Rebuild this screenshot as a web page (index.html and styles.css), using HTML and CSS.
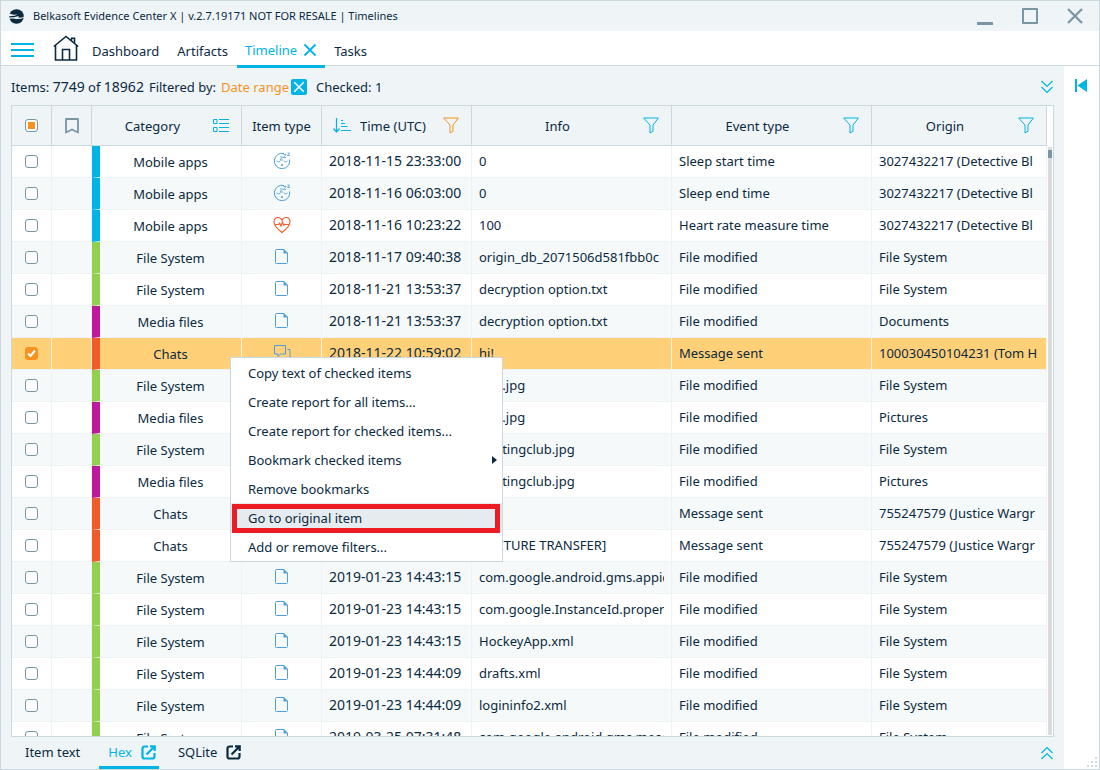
FILE: index.html
```html
<!DOCTYPE html>
<html lang="en">
<head>
    <meta charset="UTF-8">
    <meta name="viewport" content="width=device-width, initial-scale=1.0">
    <title>Belkasoft Evidence Center X</title>
    <link rel="stylesheet" href="styles.css">
</head>
<body>
    <!-- Shared icons -->
    <svg class="sprite" aria-hidden="true">
        <symbol id="icon-filter" viewBox="0 0 16 17">
            <path d="M.6 1h14.8L10 8v6.2L7 16V8z" fill="none" stroke="currentColor"/>
        </symbol>
        <symbol id="icon-close" viewBox="0 0 14 14">
            <path d="M1.5 1.5l11 11M12.5 1.5l-11 11" fill="none" stroke="currentColor" stroke-width="1.8"/>
        </symbol>
        <symbol id="icon-open" viewBox="0 0 15 15">
            <path d="M7 1.5H3.500a2 2 0 0 0-2 2v8a2 2 0 0 0 2 2h8a2 2 0 0 0 2-2V8M9 1.300h4.700V6M13.500 1.500L5.500 9.500" fill="none" stroke="currentColor" stroke-width="2.200"/>
        </symbol>
        <symbol id="icon-sleep" viewBox="0 0 18 18">
            <g fill="none" stroke="currentColor">
                <path d="M11 1.500A7.700 7.700 0 1 0 16.600 7.500"/>
                <path d="M3.500 9q2 1.800 4 0M10.500 9q2 1.800 4 0M7 5h2.500L7 8h3M10.500 2.500H13l-2.500 3H13M14.500 1h2l-2 2.500h2.500" stroke-width=".8"/>
                <circle cx="9" cy="13" r=".7"/>
            </g>
        </symbol>
        <symbol id="icon-heart" viewBox="0 0 18 18">
            <path d="M9 16.500C5 13.500 1 9.800 1 5.800 1 3 2.800 1.500 5 1.500c1.800 0 3.200 1 4 2.700.8-1.700 2.200-2.700 4-2.700 2.200 0 4 1.500 4 4.300 0 4-4 7.700-8 10.700zM1.500 8.500h4l1.200-1.500 1.300 3 1.500-4 1.300 3.500.8-1H16.500" fill="none" stroke="currentColor" stroke-width="1.100"/>
        </symbol>
        <symbol id="icon-file" viewBox="0 0 18 18">
            <path d="M3.500 1.500h7.500l3.500 3.500v9.500a1 1 0 0 1-1 1h-10a1 1 0 0 1-1-1v-12a1 1 0 0 1 1-1z" fill="none" stroke="currentColor"/>
            <path d="M10.500 1v4.500h4z" fill="currentColor"/>
        </symbol>
        <symbol id="icon-chat" viewBox="0 0 18 18">
            <path d="M1.500 1.500h11v8.500H7.500L5 12.500V10H1.500zM14.500 5.500h2.500v8h-2v2L12.500 13.500H8" fill="none" stroke="currentColor"/>
        </symbol>
    </svg>

    <div class="window">
        <header class="titlebar">
            <svg class="logo" viewBox="0 0 16 16">
                <circle cx="8" cy="8" r="7.8" fill="#0b2a3f"/>
                <path d="M0 4.800l5 1.400 4-.4-3 1.500-6 .4zM0 9l5.500-.3 4-.9 1.500.7-1.800 1.700L13 10.500l3-1.500v-1l-2 1-3.500.3L8 11l-3-.8-5 .2z" fill="#eff4f7"/>
            </svg>
            <span class="title">Belkasoft Evidence Center X | v.2.7.19171 NOT FOR RESALE | Timelines</span>
            <div class="window-buttons">
                <button aria-label="Minimize"><svg width="16" height="18" viewBox="0 0 16 18"><path d="M1 16.500h14" stroke-width="3" stroke-linecap="round"/></svg></button>
                <button aria-label="Maximize"><svg width="16" height="18" viewBox="0 0 16 18"><path d="M1 2h14v14H1z" stroke-width="2" stroke-linejoin="round"/></svg></button>
                <button aria-label="Close"><svg width="16" height="18" viewBox="0 0 16 18"><path d="M1 2l14 14M15 2L1 16" stroke-width="2.200"/></svg></button>
            </div>
        </header>

        <nav class="main-nav">
            <button class="menu-button" aria-label="Menu"><svg width="23" height="16" viewBox="0 0 23 16"><path d="M0 2h23M0 8h23M0 14h23" stroke="#00b4e5" stroke-width="2"/></svg></button>
            <a href="#" class="home" aria-label="Home"><svg width="26" height="26" viewBox="0 0 26 26"><path d="M.8 11.500L13 1.500l12.200 10M2.500 10v15h21V10M18.500 5.500V3.200h3v5M9.500 25V14.500h7V25" fill="none" stroke="#0b2a3f" stroke-width="1.600"/></svg></a>
            <a href="#" class="nav-tab">Dashboard</a>
            <a href="#" class="nav-tab">Artifacts</a>
            <div class="nav-tab active">
                <a href="#">Timeline</a>
                <button aria-label="Close Timeline"><svg width="14" height="14"><use href="#icon-close"/></svg></button>
            </div>
            <a href="#" class="nav-tab">Tasks</a>
        </nav>

        <div class="workspace">
            <main class="content">
                <div class="filter-bar">
                    <span>Items: <span class="count">7749</span> of <span class="count">18962</span></span>
                    <span class="filtered">Filtered by:</span>
                    <a href="#" class="filter-link">Date range</a>
                    <button class="clear-filter" aria-label="Clear filter"><svg width="12" height="12"><use href="#icon-close"/></svg></button>
                    <span>Checked: 1</span>
                    <button class="collapse" aria-label="Expand all"><svg width="12" height="14" viewBox="0 0 12 14"><path d="M.5 1L6 6.500 11.500 1M.5 7L6 12.500 11.500 7" fill="none" stroke="#00b4e5" stroke-width="1.200"/></svg></button>
                </div>

                <div class="grid">
                    <div class="table-area">
                        <table>
                            <colgroup>
                                <col class="col-small"><col class="col-small"><col class="col-medium"><col class="col-type">
                                <col class="col-medium"><col class="col-large"><col class="col-large"><col>
                            </colgroup>
                            <thead>
                                <tr>
                                    <th><input type="checkbox" class="partial" aria-label="Select all"></th>
                                    <th><svg class="bookmark" width="14" height="16" viewBox="0 0 14 16"><path d="M1 1h12v13.500L7 11.500l-6 3z" fill="none" stroke="#7896a4" stroke-width="1.800" stroke-linejoin="round"/></svg></th>
                                    <th><div class="head"><span>Category</span><svg class="head-icon" width="16" height="13" viewBox="0 0 16 13"><path d="M.5.5h3.500v4H.5zM.5 8.500h3.500v4H.5zM6 .5h10M6 4.500h10M6 8.500h10M6 12.500h10" fill="none" stroke="currentColor"/></svg></div></th>
                                    <th>Item type</th>
                                    <th><div class="head sorted"><svg class="sort-icon" width="18" height="16" viewBox="0 0 18 16"><path d="M3.500 0v14M.5 10.500l3 3.500 3-3.500M8 2.500h2M8 5.500h4M8 8.500h6.500M8 12.500h10" fill="none" stroke="currentColor" stroke-width="1.200"/></svg><span>Time (UTC)</span><svg class="head-icon orange" width="16" height="17"><use href="#icon-filter"/></svg></div></th>
                                    <th><div class="head"><span>Info</span><svg class="head-icon" width="16" height="17"><use href="#icon-filter"/></svg></div></th>
                                    <th><div class="head"><span>Event type</span><svg class="head-icon" width="16" height="17"><use href="#icon-filter"/></svg></div></th>
                                    <th><div class="head"><span>Origin</span><svg class="head-icon" width="16" height="17"><use href="#icon-filter"/></svg></div></th>
                                </tr>
                            </thead>
                            <tbody id="rows"></tbody>
                        </table>
                    </div>
                    <div class="scrollbar"><div class="thumb"></div></div>

                    <div class="context-menu" role="menu">
                        <button role="menuitem">Copy text of checked items</button>
                        <button role="menuitem">Create report for all items...</button>
                        <button role="menuitem">Create report for checked items...</button>
                        <button role="menuitem" class="submenu">Bookmark checked items</button>
                        <button role="menuitem">Remove bookmarks</button>
                        <button role="menuitem" class="highlighted">Go to original item</button>
                        <button role="menuitem">Add or remove filters...</button>
                    </div>
                </div>

                <div class="bottom-tabs">
                    <a href="#" class="bottom-tab">Item text</a>
                    <a href="#" class="bottom-tab active">Hex <svg width="15" height="15"><use href="#icon-open"/></svg></a>
                    <a href="#" class="bottom-tab">SQLite <svg width="15" height="15"><use href="#icon-open"/></svg></a>
                    <button class="collapse" aria-label="Show panel"><svg width="12" height="14" viewBox="0 0 12 14"><path d="M.5 7L6 1.500 11.500 7M.5 13L6 7.500 11.500 13" fill="none" stroke="#00b4e5" stroke-width="1.200"/></svg></button>
                </div>
            </main>

            <aside class="side-rail">
                <button aria-label="Open side panel"><svg width="12" height="13" viewBox="0 0 12 13"><path d="M0 0h2v13H0zM12 0v13L2.500 6.500z" fill="#00b4e5"/></svg></button>
                <svg class="grip" width="11" height="11" viewBox="0 0 11 11"><path d="M8 0h2v2H8zM4 4h2v2H4zM8 4h2v2H8zM0 8h2v2H0zM4 8h2v2H4zM8 8h2v2H8z" fill="#cfdae0"/></svg>
            </aside>
        </div>
    </div>
    <script src="script.js"></script>
</body>
</html>
```
FILE: styles.css
```css
* {
    box-sizing: border-box;
}

body {
    margin: 0;
    height: 100vh;
    overflow: hidden;
    font-family: "Noto Sans", "Open Sans", sans-serif;
    font-size: 13px;
    line-height: 20px;
    color: #0b2a3f;
}

button {
    display: flex;
    padding: 0;
    border: 0;
    background: none;
    font: inherit;
    color: inherit;
    cursor: pointer;
}

a {
    color: inherit;
    text-decoration: none;
}

svg {
    display: block;
    flex: none;
}

.sprite {
    position: absolute;
    width: 0;
    height: 0;
}

.window {
    display: flex;
    flex-direction: column;
    height: 100vh;
    border: 1px solid #cbd8de;
    background-color: #eff4f7;
}

/* Title bar */
.titlebar {
    display: flex;
    align-items: center;
    height: 30px;
    padding: 0 16px 0 8px;
}

.logo {
    width: 15px;
    height: 15px;
}

.title {
    margin-left: 9px;
    font-size: 11px;
}

.window-buttons {
    display: flex;
    gap: 29px;
    margin-left: auto;
}

.window-buttons path {
    fill: none;
    stroke: #7896a4;
}

/* Navigation */
.main-nav {
    display: flex;
    align-items: center;
    height: 35px;
    padding-left: 10px;
    background-color: #fff;
    border-bottom: 1px solid #cbd8de;
}

.menu-button {
    margin-top: 4px;
}

.home {
    margin: 0 4px 0 19px;
}

.nav-tab {
    display: flex;
    align-items: center;
    gap: 6px;
    height: 35px;
    margin-top: 1px;
    padding: 4px 9px 0;
}

.nav-tab.active {
    height: 36px;
    margin-top: 3px;
    padding: 4px 8px 0;
    color: #00b4e5;
    border-bottom: 3px solid #00b4e5;
}

/* Main area */
.workspace {
    display: flex;
    flex: 1;
    min-height: 0;
}

.content {
    display: flex;
    flex-direction: column;
    flex: 1;
    min-width: 0;
    padding: 0 10px;
}

.filter-bar {
    display: flex;
    align-items: center;
    height: 39px;
    padding-top: 2px;
}

.filtered {
    margin: 0 5px;
}

.count {
    font-size: 14px;
}

.filter-link {
    color: #f7921e;
}

.clear-filter {
    align-items: center;
    justify-content: center;
    width: 16px;
    height: 16px;
    margin: 0 9px 0 2px;
    color: #fff;
    background-color: #00b4e5;
    border-radius: 2px;
}

.collapse {
    margin: 0 1px 0 auto;
}

.grid {
    position: relative;
    display: flex;
    flex: 1;
    min-height: 0;
    border: 1px solid #cbd8de;
    background-color: #fff;
}

.table-area {
    flex: 1;
    min-width: 0;
    overflow: hidden;
}

table {
    width: 100%;
    table-layout: fixed;
    border-collapse: separate;
    border-spacing: 0;
}

.col-small {
    width: 40px;
}

.col-medium {
    width: 150px;
}

.col-type {
    width: 80px;
}

.col-large {
    width: 200px;
}

th {
    height: 40px;
    padding: 0;
    font-weight: normal;
    background-color: #eff4f7;
    border-right: 1px solid #cbd8de;
    border-bottom: 1px solid #cbd8de;
}

.head {
    display: flex;
    align-items: center;
}

.head span {
    flex: 1;
    text-align: center;
}

.head.sorted span {
    padding-right: 8px;
}

.head-icon {
    margin-right: 12px;
    color: #00b4e5;
}

.head-icon.orange {
    color: #f7921e;
}

.sort-icon {
    margin-left: 11px;
    color: #00b4e5;
}

.bookmark {
    margin: 0 auto;
}

td {
    height: 32px;
    padding: 0 7px 2px;
    border-right: 1px solid #eff3f5;
    border-bottom: 1px solid #eff3f5;
}

tbody tr:nth-child(even) {
    background-color: #f5f9fa;
}

tbody tr.checked {
    background-color: #ffd078;
}

tr.checked td {
    border-right-color: #fff5e0;
}

td div {
    overflow: hidden;
    white-space: nowrap;
}

.check-cell {
    padding: 0;
}

.category {
    padding: 1px 0 0;
    text-align: center;
    border-left: 8px solid;
}

.category.mobile {
    border-left-color: #00b4e5;
}

.category.file {
    border-left-color: #92d050;
}

.category.media {
    border-left-color: #c0179f;
}

.category.chat {
    border-left-color: #f15a29;
}

.time {
    font-size: 14px;
}

.type-icon {
    width: 18px;
    height: 18px;
    margin: 0 auto;
    color: #4a9fdc;
}

.type-icon.heart {
    color: #f15a29;
}

input[type="checkbox"] {
    display: block;
    appearance: none;
    width: 13px;
    height: 13px;
    margin: 0 auto;
    border: 1px solid #7896a4;
    border-radius: 3px;
    background-color: #fff;
}

input[type="checkbox"].partial {
    background-image: linear-gradient(#f7921e, #f7921e);
    background-size: 7px 7px;
    background-position: center;
    background-repeat: no-repeat;
}

input[type="checkbox"]:checked {
    border-color: #f7921e;
    background: #f7921e url("data:image/svg+xml,%3Csvg xmlns='http://www.w3.org/2000/svg' viewBox='0 0 11 11'%3E%3Cpath d='M2 5.500l2.500 2.500L9 2.500' fill='none' stroke='%23fff' stroke-width='2'/%3E%3C/svg%3E");
}

.scrollbar {
    width: 6px;
    margin: 41px 0 1px;
    padding-top: 3px;
    border: solid #fff;
    border-width: 0 1px;
    background-color: #dcdcdc;
}

.thumb {
    height: 8px;
    background-color: #7896a4;
}

/* Context menu */
.context-menu {
    position: absolute;
    top: 251px;
    left: 218px;
    width: 273px;
    border: 1px solid #cbd8de;
    background-color: #fff;
}

.context-menu button {
    position: relative;
    align-items: center;
    width: 100%;
    height: 29px;
    padding-left: 17px;
}

.context-menu .highlighted {
    background-color: #e6ebef;
}

.highlighted::after {
    content: "";
    position: absolute;
    inset: 1px 2px -1px 1px;
    border: 5px solid #ed1c24;
}

.submenu::after {
    content: "";
    margin-left: auto;
    margin-right: 5px;
    border: 4px solid transparent;
    border-left: 5px solid #0b2a3f;
    border-right: 0;
}

/* Bottom tabs */
.bottom-tabs {
    display: flex;
    align-items: center;
    height: 32px;
    padding-left: 4px;
}

.bottom-tab {
    display: flex;
    align-items: center;
    gap: 9px;
    height: 32px;
    padding: 0 10px 2px;
}

.bottom-tab.active {
    margin: 0 9px;
    padding: 1px 3px 0 9px;
    color: #00b4e5;
    border-bottom: 3px solid #00b4e5;
}

/* Side rail */
.side-rail {
    display: flex;
    flex-direction: column;
    justify-content: space-between;
    align-items: center;
    width: 35px;
    padding-top: 13px;
    background-color: #fff;
}

.side-rail button {
    margin-right: 2px;
}

.grip {
    align-self: flex-end;
    margin: 0 1px 1px 0;
}
```
FILE: script.js
```javascript
const rows = [
    ['mobile', 'sleep', '2018-11-15 23:33:00', '0', 'Sleep start time', '3027432217 (Detective Bl'],
    ['mobile', 'sleep', '2018-11-16 06:03:00', '0', 'Sleep end time', '3027432217 (Detective Bl'],
    ['mobile', 'heart', '2018-11-16 10:23:22', '100', 'Heart rate measure time', '3027432217 (Detective Bl'],
    ['file', 'file', '2018-11-17 09:40:38', 'origin_db_2071506d581fbb0c', 'File modified', 'File System'],
    ['file', 'file', '2018-11-21 13:53:37', 'decryption option.txt', 'File modified', 'File System'],
    ['media', 'file', '2018-11-21 13:53:37', 'decryption option.txt', 'File modified', 'Documents'],
    ['chat', 'chat', '2018-11-22 10:59:02', 'hi!', 'Message sent', '100030450104231 (Tom H'],
    ['file', 'file', '2018-12-04 12:10:20', 'ann.jpg', 'File modified', 'File System'],
    ['media', 'file', '2018-12-04 12:10:20', 'ann.jpg', 'File modified', 'Pictures'],
    ['file', 'file', '2018-12-04 12:10:24', 'boatingclub.jpg', 'File modified', 'File System'],
    ['media', 'file', '2018-12-04 12:10:24', 'boatingclub.jpg', 'File modified', 'Pictures'],
    ['chat', 'chat', '2018-12-12 15:21:07', '', 'Message sent', '755247579 (Justice Wargr'],
    ['chat', 'chat', '2018-12-12 15:22:40', '[PICTURE TRANSFER]', 'Message sent', '755247579 (Justice Wargr'],
    ['file', 'file', '2019-01-23 14:43:15', 'com.google.android.gms.appid', 'File modified', 'File System'],
    ['file', 'file', '2019-01-23 14:43:15', 'com.google.InstanceId.propert', 'File modified', 'File System'],
    ['file', 'file', '2019-01-23 14:43:15', 'HockeyApp.xml', 'File modified', 'File System'],
    ['file', 'file', '2019-01-23 14:44:09', 'drafts.xml', 'File modified', 'File System'],
    ['file', 'file', '2019-01-23 14:44:09', 'logininfo2.xml', 'File modified', 'File System'],
    ['file', 'file', '2019-03-25 07:31:48', 'com.google.android.gms.meas', 'File modified', 'File System']
];

const categories = {
    mobile: 'Mobile apps',
    file: 'File System',
    media: 'Media files',
    chat: 'Chats'
};

const body = document.getElementById('rows');

rows.forEach(([category, icon, time, info, event, origin], index) => {
    const checked = index === 6;
    const row = document.createElement('tr');
    row.className = checked ? 'checked' : '';
    row.innerHTML = `
        <td class="check-cell"><input type="checkbox" aria-label="Select item ${index + 1}" ${checked ? 'checked' : ''}></td>
        <td></td>
        <td class="category ${category}">${categories[category]}</td>
        <td><svg class="type-icon ${icon}"><use href="#icon-${icon}"/></svg></td>
        <td class="time"><div>${time}</div></td>
        <td><div>${info}</div></td>
        <td><div>${event}</div></td>
        <td><div>${origin}</div></td>`;
    body.appendChild(row);
});
```
